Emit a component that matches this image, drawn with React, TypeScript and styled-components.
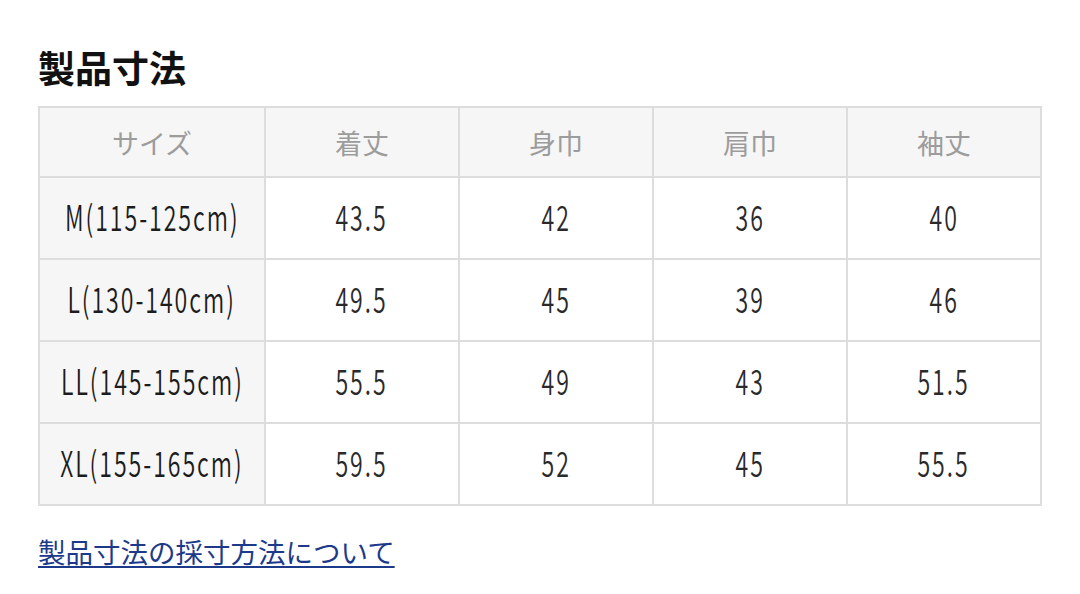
import React from "react";
import styled, { createGlobalStyle } from "styled-components";

const GlobalStyle = createGlobalStyle`
  html, body {
    margin: 0;
    padding: 0;
    background: #fff;
  }
  body {
    font-family: "Noto Sans CJK JP", "Noto Sans", sans-serif;
    color: #222;
  }
`;

const headers = ["サイズ", "着丈", "身巾", "肩巾", "袖丈"];

const rows: string[][] = [
  ["M(115-125cm)", "43.5", "42", "36", "40"],
  ["L(130-140cm)", "49.5", "45", "39", "46"],
  ["LL(145-155cm)", "55.5", "49", "43", "51.5"],
  ["XL(155-165cm)", "59.5", "52", "45", "55.5"],
];

const App = () => {
  return (
    <>
      <GlobalStyle />
      <Page>
        <Title>製品寸法</Title>
        <SizeTable>
          <colgroup>
            <col style={{ width: 226 }} />
            <col />
            <col />
            <col />
            <col />
          </colgroup>
          <thead>
            <HeadRow>
              {headers.map((h) => (
                <HeadCell key={h}>{h}</HeadCell>
              ))}
            </HeadRow>
          </thead>
          <tbody>
            {rows.map((row) => (
              <BodyRow key={row[0]}>
                {row.map((cell, i) => (
                  <Cell key={i} $label={i === 0}>
                    <CellInner>
                      <Narrow>{cell}</Narrow>
                    </CellInner>
                  </Cell>
                ))}
              </BodyRow>
            ))}
          </tbody>
        </SizeTable>
        <HowTo href="#">製品寸法の採寸方法について</HowTo>
      </Page>
    </>
  );
};

export default App;

const Page = styled.div`
  width: 1080px;
  padding: 45px 38px 0 38px;
  box-sizing: border-box;
  display: flex;
  flex-direction: column;
  align-items: flex-start;
`;

const Title = styled.h2`
  margin: 0 0 16px 0;
  font-size: 37px;
  line-height: 45px;
  font-weight: 700;
  color: #111;
`;

const SizeTable = styled.table`
  width: 1004px;
  border-collapse: collapse;
  table-layout: fixed;
  border: 2px solid #dddddd;
`;

const HeadRow = styled.tr`
  height: 70px;
`;

const HeadCell = styled.th`
  background: #f6f6f6;
  border: 2px solid #dddddd;
  font-weight: 400;
  font-size: 27px;
  color: #9c9c9c;
  text-align: center;
  vertical-align: middle;
  padding: 0;
`;

const BodyRow = styled.tr`
  height: 82px;
`;

const Cell = styled.td<{ $label?: boolean }>`
  background: ${(p) => (p.$label ? "#f6f6f6" : "#fff")};
  border: 2px solid #dddddd;
  vertical-align: middle;
  padding: 0;
  color: ${(p) => (p.$label ? "#1c1c1c" : "#2a2a2a")};
`;

const CellInner = styled.div`
  display: flex;
  justify-content: center;
  align-items: center;
  width: 100%;
`;

const Narrow = styled.span`
  flex: none;
  font-family: "Noto Sans CJK JP", "Noto Sans", sans-serif;
  font-size: 35px;
  font-weight: 350;
  line-height: 40px;
  padding-bottom: 5px;
  letter-spacing: 3px;
  transform: scaleX(0.66);
  white-space: nowrap;
`;

const HowTo = styled.a`
  margin-top: 25px;
  font-size: 27.5px;
  line-height: 40px;
  color: #1d3a8a;
  text-decoration: underline;
  text-underline-offset: 3px;
`;
